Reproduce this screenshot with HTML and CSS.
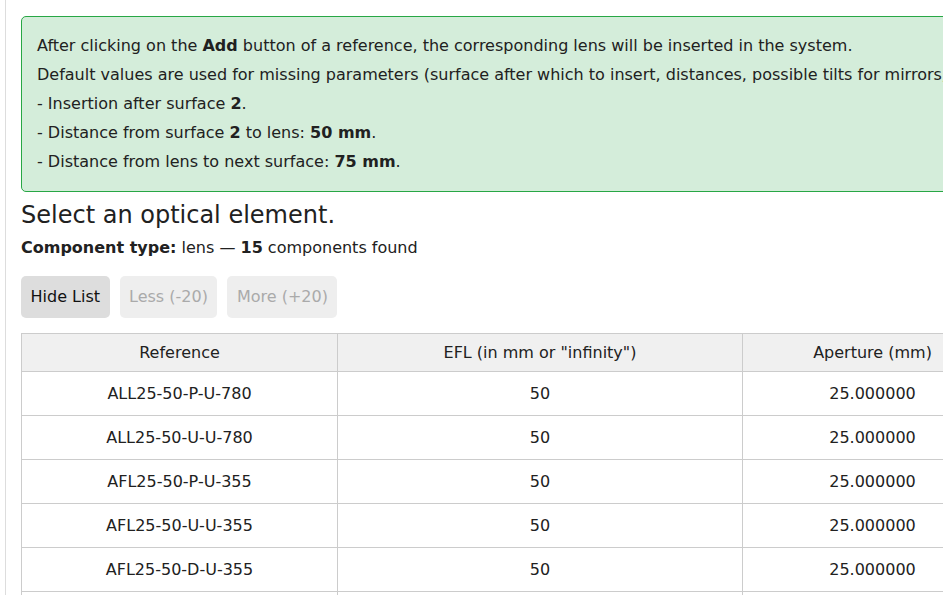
FILE: index.html
```html
<!DOCTYPE html>
<html lang="en">
  <head>
    <meta charset="UTF-8" />
    <meta name="viewport" content="width=device-width, initial-scale=1.0" />
    <title>Select an optical element</title>
    <link rel="stylesheet" href="styles.css">
  </head>
  <body>
    <div class="panel">
      <div class="info-box">
        <p>After clicking on the <strong>Add</strong> button of a reference, the corresponding lens will be inserted in the system.</p>
        <p>Default values are used for missing parameters (surface after which to insert, distances, possible tilts for mirrors, etc.):</p>
        <p>- Insertion after surface <strong>2</strong>.</p>
        <p>- Distance from surface <strong>2</strong> to lens: <strong>50 mm</strong>.</p>
        <p>- Distance from lens to next surface: <strong>75 mm</strong>.</p>
      </div>

      <h2>Select an optical element.</h2>
      <p class="summary">
        <strong>Component type:</strong> lens &mdash; <strong>15</strong> components found
      </p>

      <div class="actions">
        <button class="btn">Hide List</button>
        <button class="btn" disabled>Less (-20)</button>
        <button class="btn" disabled>More (+20)</button>
      </div>

      <!-- liste des composants -->
      <table class="components">
        <thead>
          <tr>
            <th class="col-ref">Reference</th>
            <th class="col-efl">EFL (in mm or "infinity")</th>
            <th class="col-ap">Aperture (mm)</th>
            <th class="col-add"></th>
          </tr>
        </thead>
        <tbody>
          <tr><td>ALL25-50-P-U-780</td><td>50</td><td>25.000000</td><td><button class="btn-add">Add</button></td></tr>
          <tr><td>ALL25-50-U-U-780</td><td>50</td><td>25.000000</td><td><button class="btn-add">Add</button></td></tr>
          <tr><td>AFL25-50-P-U-355</td><td>50</td><td>25.000000</td><td><button class="btn-add">Add</button></td></tr>
          <tr><td>AFL25-50-U-U-355</td><td>50</td><td>25.000000</td><td><button class="btn-add">Add</button></td></tr>
          <tr><td>AFL25-50-D-U-355</td><td>50</td><td>25.000000</td><td><button class="btn-add">Add</button></td></tr>
          <tr><td>AFL25-50-P-U-532</td><td>50</td><td>25.000000</td><td><button class="btn-add">Add</button></td></tr>
        </tbody>
      </table>
    </div>
  </body>
</html>
```

FILE: styles.css
```css
* {
  box-sizing: border-box;
}
html,
body {
  overflow: hidden;
}
body {
  margin: 0;
  font-family: "DejaVu Sans", sans-serif;
  font-size: 16px;
  color: #212121;
  background: #fff;
}
.panel {
  width: 1100px;
  min-height: 100vh;
  margin-left: 5px;
  padding: 16px 15px 20px;
  border-left: 1px solid #ddd;
}
.info-box {
  background: #d4edda;
  border: 1px solid #28a745;
  border-radius: 5px;
  padding: 14px 15px 15px;
}
.info-box p {
  margin: 0;
  line-height: 29px;
  white-space: nowrap;
}
h2 {
  font-size: 24px;
  font-weight: normal;
  margin: 9px 0 9px;
  line-height: 28px;
}
.summary {
  margin: 0 0 18px;
  line-height: 20px;
}
.actions {
  display: flex;
  gap: 10px;
  margin-bottom: 15px;
}
.btn {
  font-family: inherit;
  font-size: 16px;
  padding: 11px 9.5px;
  line-height: 20px;
  border: none;
  border-radius: 5px;
  background: #ddd;
  color: #111;
  cursor: pointer;
}
.btn:disabled {
  background: #eee;
  color: #aaa;
  cursor: default;
}
.components {
  border-collapse: collapse;
  width: 1082px;
}
.components th,
.components td {
  border: 1px solid #ccc;
  text-align: center;
  font-weight: normal;
}
.components th {
  background: #f0f0f0;
  padding: 9px 8px;
  line-height: 19px;
}
.components td {
  padding: 11.5px 8px;
  line-height: 19px;
}
.col-ref {
  width: 316px;
}
.col-efl {
  width: 405px;
}
.col-ap {
  width: 260px;
}
.btn-add {
  font-family: inherit;
  font-size: 14px;
  line-height: 19px;
  padding: 0 10px;
  border: none;
  border-radius: 4px;
  background: #28a745;
  color: #fff;
  vertical-align: middle;
}
```
